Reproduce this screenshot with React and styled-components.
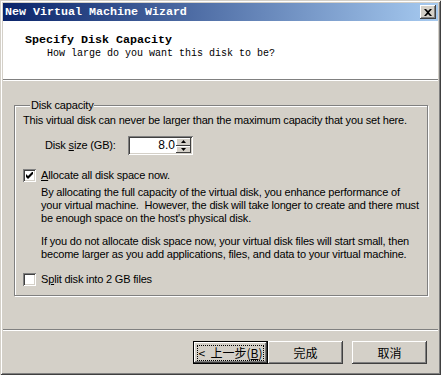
import React from "react";
import styled, { createGlobalStyle } from "styled-components";

const GlobalStyle = createGlobalStyle`
  html, body { margin: 0; padding: 0; background: #d4d0c8; }
  body { font-family: "Liberation Sans", Arial, sans-serif; font-size: 11px; color: #000; }
  * { box-sizing: border-box; }
`;

const Window = styled.div`
  width: 441px;
  height: 375px;
  padding: 3px;
  background: #d4d0c8;
  display: flex;
  flex-direction: column;
  box-shadow: inset 1px 1px 0 #d4d0c8, inset -1px -1px 0 #404040,
    inset 2px 2px 0 #ffffff, inset -2px -2px 0 #808080;
`;

const TitleBar = styled.div`
  height: 18px;
  flex: none;
  display: flex;
  align-items: center;
  justify-content: space-between;
  padding: 0 2px 0 2px;
  background: linear-gradient(to right, #0a246a, #a6caf0);
`;

const TitleText = styled.span`
  font-family: "Liberation Mono", "Courier New", monospace;
  font-weight: bold;
  font-size: 11.67px;
  color: #fff;
  line-height: 14px;
`;

const CloseButton = styled.div`
  width: 16px;
  height: 14px;
  background: #d4d0c8;
  display: flex;
  align-items: center;
  justify-content: center;
  box-shadow: inset -1px -1px 0 #404040, inset 1px 1px 0 #ffffff,
    inset -2px -2px 0 #808080;
`;

const Header = styled.div`
  height: 58px;
  flex: none;
  background: #fff;
  padding: 12px 0 0 22px;
`;

const HeaderTitle = styled.div`
  font-family: "Liberation Mono", "Courier New", monospace;
  font-weight: bold;
  font-size: 11.67px;
  line-height: 14px;
`;

const HeaderSub = styled.div`
  font-family: "Liberation Mono", "Courier New", monospace;
  font-size: 10px;
  line-height: 12px;
  padding-left: 22px;
  margin-top: 1px;
`;

const Etch = styled.div`
  height: 2px;
  flex: none;
  border-top: 1px solid #808080;
  border-bottom: 1px solid #ffffff;
`;

const Body = styled.div`
  flex: 1;
  display: flex;
  flex-direction: column;
  letter-spacing: -0.18px;
`;

const Group = styled.fieldset`
  margin: 18px 11px 0 11px;
  padding: 0 8px 10px 8px;
  height: 197px;
  border: 1px solid #808080;
  box-shadow: 1px 1px 0 #ffffff, inset 1px 1px 0 #ffffff;
`;

const Legend = styled.legend`
  padding: 0 1px;
  margin-left: 7px;
  line-height: 13px;
  background: #d4d0c8;
`;

const Line = styled.div`
  line-height: 13px;
  white-space: pre;
  margin-top: ${(p) => p.$mt || 0}px;
  padding-left: ${(p) => p.$indent || 0}px;
`;

const SizeRow = styled.div`
  display: flex;
  align-items: center;
  margin-top: 9px;
  padding-left: 22px;
`;

const SizeLabel = styled.span`
  width: 83px;
  line-height: 13px;
`;

const Spin = styled.div`
  display: flex;
  height: 19px;
  width: 65px;
  background: #fff;
  box-shadow: inset 1px 1px 0 #808080, inset -1px -1px 0 #ffffff,
    inset 2px 2px 0 #404040, inset -2px -2px 0 #d4d0c8;
  padding: 2px;
`;

const SpinValue = styled.div`
  flex: 1;
  text-align: right;
  line-height: 15px;
  font-size: 12px;
  letter-spacing: 0;
  padding-right: 1px;
`;

const SpinButtons = styled.div`
  width: 15px;
  display: flex;
  flex-direction: column;
`;

const SpinBtn = styled.div`
  flex: 1;
  background: #d4d0c8;
  display: flex;
  align-items: center;
  justify-content: center;
  box-shadow: inset -1px -1px 0 #404040, inset 1px 1px 0 #ffffff;
`;

const CheckRow = styled.div`
  display: flex;
  align-items: center;
  margin-top: ${(p) => p.$mt || 0}px;
`;

const Box = styled.div`
  width: 13px;
  height: 13px;
  flex: none;
  background: #fff;
  margin-right: 5px;
  display: flex;
  align-items: center;
  justify-content: center;
  box-shadow: inset 1px 1px 0 #808080, inset -1px -1px 0 #ffffff,
    inset 2px 2px 0 #404040, inset -2px -2px 0 #d4d0c8;
`;

const CheckLabel = styled.span`
  line-height: 13px;
`;

const U = styled.span`
  text-decoration: underline;
`;

const Spacer = styled.div`
  flex: 1;
`;

const Footer = styled.div`
  height: 41px;
  flex: none;
  display: flex;
  padding: 10px 0 0 190px;
  letter-spacing: 0;
`;

const Button = styled.div`
  width: 75px;
  height: 23px;
  margin-left: ${(p) => p.$ml || 0}px;
  background: #d4d0c8;
  font-family: "Noto Sans CJK SC", "Liberation Sans", sans-serif;
  font-size: 12px;
  display: flex;
  align-items: center;
  justify-content: center;
  box-shadow: ${(p) =>
    p.$default
      ? "inset 0 0 0 1px #000, inset -2px -2px 0 #404040, inset 2px 2px 0 #ffffff, inset -3px -3px 0 #808080"
      : "inset -1px -1px 0 #404040, inset 1px 1px 0 #ffffff, inset -2px -2px 0 #808080"};
`;

const Focus = styled.div`
  border: 1px dotted #000;
  width: 67px;
  height: 16px;
  display: flex;
  align-items: center;
  justify-content: center;
  line-height: 14px;
  white-space: pre;
`;

export default function App() {
  return (
    <>
      <GlobalStyle />
      <Window>
        <TitleBar>
          <TitleText>New Virtual Machine Wizard</TitleText>
          <CloseButton>
            <svg width="8" height="7" viewBox="0 0 8 7">
              <path d="M0 0h2l2 2 2-2h2L5 3.5 8 7H6L4 5 2 7H0l3-3.5z" fill="#000" />
            </svg>
          </CloseButton>
        </TitleBar>
        <Header>
          <HeaderTitle>Specify Disk Capacity</HeaderTitle>
          <HeaderSub>How large do you want this disk to be?</HeaderSub>
        </Header>
        <Etch />
        <Body>
          <Group>
            <Legend>Disk capacity</Legend>
            <Line $mt={2}>This virtual disk can never be larger than the maximum capacity that you set here.</Line>
            <SizeRow>
              <SizeLabel>
                Disk <U>s</U>ize (GB):
              </SizeLabel>
              <Spin>
                <SpinValue>8.0</SpinValue>
                <SpinButtons>
                  <SpinBtn>
                    <svg width="5" height="3" viewBox="0 0 5 3"><path d="M2.5 0L5 3H0z" fill="#000" /></svg>
                  </SpinBtn>
                  <SpinBtn>
                    <svg width="5" height="3" viewBox="0 0 5 3"><path d="M0 0h5L2.5 3z" fill="#000" /></svg>
                  </SpinBtn>
                </SpinButtons>
              </Spin>
            </SizeRow>
            <CheckRow $mt={14}>
              <Box>
                <svg width="7" height="7" viewBox="0 0 7 7">
                  <path d="M0 2v3l2 2 5-5V-1L2 4z" fill="#000" />
                </svg>
              </Box>
              <CheckLabel>
                <U>A</U>llocate all disk space now.
              </CheckLabel>
            </CheckRow>
            <Line $indent={18} $mt={4}>By allocating the full capacity of the virtual disk, you enhance performance of</Line>
            <Line $indent={18}>your virtual machine.  However, the disk will take longer to create and there must</Line>
            <Line $indent={18}>be enough space on the host's physical disk.</Line>
            <Line $indent={18} $mt={10}>If you do not allocate disk space now, your virtual disk files will start small, then</Line>
            <Line $indent={18}>become larger as you add applications, files, and data to your virtual machine.</Line>
            <CheckRow $mt={12}>
              <Box />
              <CheckLabel>
                S<U>p</U>lit disk into 2 GB files
              </CheckLabel>
            </CheckRow>
          </Group>
          <Spacer />
          <Etch />
          <Footer>
            <Button $default>
              <Focus>
                {"<  上一步("}
                <U>B</U>
                {")"}
              </Focus>
            </Button>
            <Button>完成</Button>
            <Button $ml={9}>取消</Button>
          </Footer>
        </Body>
      </Window>
    </>
  );
}
